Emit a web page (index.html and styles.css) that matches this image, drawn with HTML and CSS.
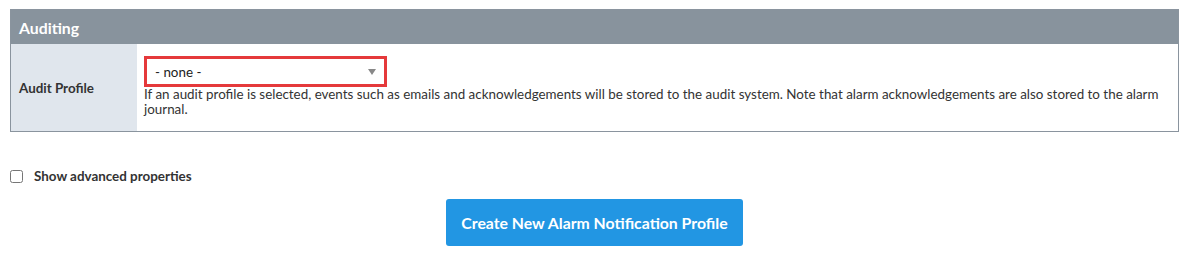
FILE: index.html
```html
<!DOCTYPE html>
<html lang="en">
<head>
    <meta charset="UTF-8">
    <meta name="viewport" content="width=device-width, initial-scale=1.0">
    <title>Alarm Notification Profile</title>
    <link rel="stylesheet" href="styles.css">
</head>
<body>
    <div class="layout-container">
        <table class="props-table">
            <tr>
                <th colspan="2" class="section-header">Auditing</th>
            </tr>
            <tr>
                <td class="prop-label">Audit Profile</td>
                <td class="prop-value">
                    <div class="select-box">
                        <span>- none -</span>
                        <span class="select-arrow"></span>
                    </div>
                    <p class="help-text">If an audit profile is selected, events such as emails and acknowledgements will be stored to the audit system. Note that alarm acknowledgements are also stored to the alarm journal.</p>
                </td>
            </tr>
        </table>

        <label class="advanced-toggle">
            <input type="checkbox" class="checkbox">
            <span>Show advanced properties</span>
        </label>

        <div class="actions">
            <button class="primary-button">Create New Alarm Notification Profile</button>
        </div>
    </div>
</body>
</html>
```

FILE: styles.css
```css
body {
    margin: 0;
    font-family: Lato, "Liberation Sans", sans-serif;
    font-size: 13.4px;
    color: #333;
    background: #fff;
}

.layout-container {
    padding: 9px 10px 0 10px;
}

.props-table {
    width: 100%;
    border-collapse: collapse;
    border: 1px solid #8a949e;
}

.section-header {
    background: #88939d;
    color: #fff;
    text-align: left;
    font-size: 15.8px;
    font-weight: bold;
    height: 34px;
    padding: 0 8px;
}

.prop-label {
    width: 110px;
    background: #e0e6ed;
    font-weight: bold;
    padding: 0 8px;
    vertical-align: middle;
}

.prop-value {
    padding: 12px 8px 14px 7px;
}

.select-box {
    width: 221px;
    height: 25px;
    border: 3px solid #e5393b;
    display: flex;
    align-items: center;
    justify-content: space-between;
    padding: 0 8px 0 8px;
    color: #222;
}

.select-arrow {
    width: 0;
    height: 0;
    border-left: 4px solid transparent;
    border-right: 4px solid transparent;
    border-top: 6px solid #888;
}

.help-text {
    margin: 0;
    line-height: 15px;
    padding-right: 10px;
}

.advanced-toggle {
    display: flex;
    align-items: center;
    margin-top: 36px;
    font-weight: bold;
}

.checkbox {
    margin: 0 11px 0 0;
    width: 13px;
    height: 13px;
}

.actions {
    display: flex;
    justify-content: center;
    margin-top: 15px;
}

.primary-button {
    background: #2296e3;
    color: #fff;
    border: none;
    border-radius: 3px;
    font-family: inherit;
    font-size: 15.8px;
    font-weight: bold;
    width: 297px;
    height: 47px;
}
```
